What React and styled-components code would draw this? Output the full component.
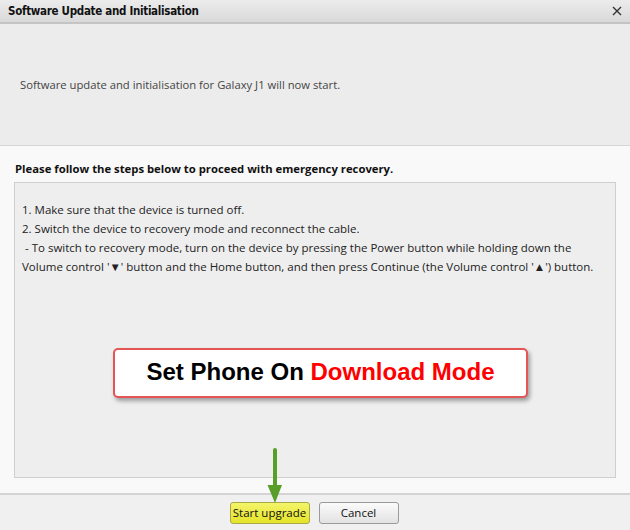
import React from 'react';
import styled, { createGlobalStyle } from 'styled-components';

const Global = createGlobalStyle`
    html, body {
        margin: 0;
        padding: 0;
        background: #f9f9f9;
    }
    body {
        font-family: "Open Sans", "Noto Sans", sans-serif;
    }
`;

const Dialog = styled.div`
    width: 630px;
    height: 530px;
    display: flex;
    flex-direction: column;
    background: #f9f9f9;
    overflow: hidden;
`;

const TitleBar = styled.div`
    height: 22px;
    flex: none;
    display: flex;
    align-items: center;
    justify-content: space-between;
    padding: 0 8px 0 8px;
    background: linear-gradient(#ececec, #d9d9d9);
    border-bottom: 2px solid #c4c4c4;

    h1 {
        margin: 0;
        font-family: "DejaVu Sans Condensed", "DejaVu Sans", sans-serif;
        font-size: 11.5px;
        font-weight: bold;
        letter-spacing: -0.3px;
        color: #111;
    }
`;

const Intro = styled.div`
    height: 122px;
    flex: none;
    box-sizing: border-box;
    padding: 53px 0 0 20px;
    background: #ececec;
    border-bottom: 1px solid #d6d6d6;
    font-size: 11.25px;
    color: #444;
`;

const Body = styled.div`
    flex: 1;
    display: flex;
    flex-direction: column;
    padding: 15px 14px 15px;
    background: #f9f9f9;
`;

const Heading = styled.h2`
    margin: 0 0 6px 1px;
    font-size: 11.3px;
    font-weight: bold;
    color: #111;
`;

const Steps = styled.div`
    position: relative;
    flex: 1;
    background: #eeeeee;
    border: 1px solid #cfcfcf;
    padding: 17px 7px 0;
    font-size: 11.5px;
    line-height: 19px;
    color: #222;

    p {
        margin: 0;
    }
`;

const Callout = styled.div`
    position: absolute;
    left: 98px;
    top: 165px;
    width: 411px;
    height: 43px;
    display: flex;
    align-items: center;
    justify-content: center;
    padding-bottom: 3px;
    background: #fff;
    border: 2px solid #e45555;
    border-radius: 5px;
    box-shadow: 2px 3px 4px rgba(0, 0, 0, 0.35);
    font-family: "Liberation Sans", Arial, sans-serif;
    font-size: 24px;
    font-weight: bold;
    color: #000;
`;

const Red = styled.span`
    color: #ff0000;
`;

const Footer = styled.div`
    height: 35px;
    flex: none;
    display: flex;
    align-items: center;
    justify-content: center;
    gap: 9px;
    padding-right: 2px;
    background: #f0f0f0;
    border-top: 2px solid #d4d4d4;
    position: relative;
`;

const Button = styled.button`
    width: 80px;
    height: 22px;
    padding: 0;
    font-family: "Open Sans", "Noto Sans", sans-serif;
    font-size: 11.5px;
    color: #111;
    border-radius: 3px;
    border: 1px solid ${p => (p.$primary ? '#a9a94a' : '#9a9a9a')};
    background: ${p => (p.$primary
        ? 'linear-gradient(#f4f46a, #e4e42a)'
        : 'linear-gradient(#fbfbfb, #e2e2e2)')};
`;

const Arrow = styled.svg`
    position: absolute;
    left: 266px;
    top: -46px;
    overflow: visible;
`;

export default function App() {
    return (
        <Dialog>
            <Global />
            <TitleBar>
                <h1>Software Update and Initialisation</h1>
                <svg width="10" height="10" viewBox="0 0 10 10">
                    <path d="M1 1L9 9M9 1L1 9" stroke="#333" strokeWidth="1.4" />
                </svg>
            </TitleBar>
            <Intro>Software update and initialisation for Galaxy J1 will now start.</Intro>
            <Body>
                <Heading>Please follow the steps below to proceed with emergency recovery.</Heading>
                <Steps>
                    <p>1. Make sure that the device is turned off.</p>
                    <p>2. Switch the device to recovery mode and reconnect the cable.</p>
                    <p>&nbsp;- To switch to recovery mode, turn on the device by pressing the Power button while holding down the
                        Volume control '▼' button and the Home button, and then press Continue (the Volume control '▲') button.</p>
                    <Callout>Set Phone On&nbsp;<Red>Download Mode</Red></Callout>
                </Steps>
            </Body>
            <Footer>
                <Button $primary>Start upgrade</Button>
                <Button>Cancel</Button>
                <Arrow width="16" height="56" viewBox="0 0 16 56">
                    <path d="M9 1L9 38" stroke="#5a9e2a" strokeWidth="4" strokeLinecap="round" />
                    <path d="M1.5 36L16 36L9 54Z" fill="#5a9e2a" />
                </Arrow>
            </Footer>
        </Dialog>
    );
}
